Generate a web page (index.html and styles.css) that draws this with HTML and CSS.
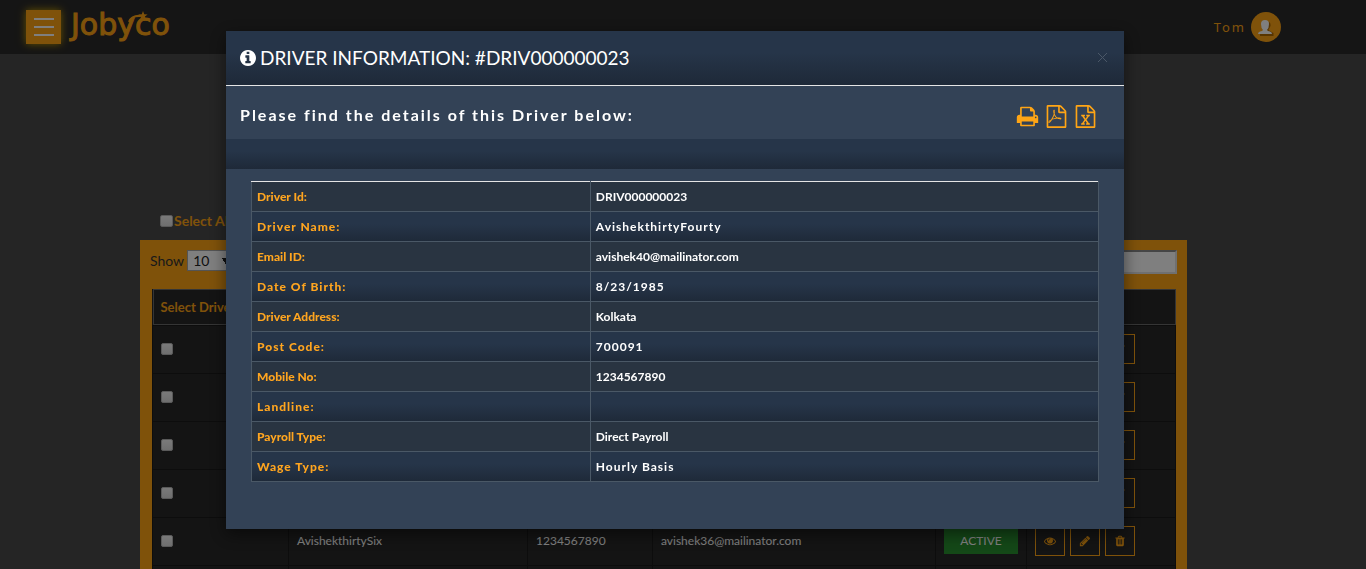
FILE: index.html
```html
<!DOCTYPE html>
<html lang="en">
<head>
<meta charset="utf-8">
<title>Jobyco - Drivers</title>
<link rel="stylesheet" href="styles.css">
</head>
<body>
<svg class="sprite" aria-hidden="true">
  <symbol id="eye" viewBox="0 0 1792 1792"><path d="M1664 960q-152-236-381-353 61 104 61 225 0 185-131.5 316.5t-316.5 131.5-316.5-131.5-131.5-316.5q0-121 61-225-229 117-381 353 133 205 333.5 326.5t434.5 121.5 434.5-121.5 333.5-326.5zm-720-384q0-20-14-34t-34-14q-125 0-214.5 89.5t-89.5 214.5q0 20 14 34t34 14 34-14 14-34q0-86 61-147t147-61q20 0 34-14t14-34zm848 384q0 34-20 69-140 230-376.5 368.5t-499.5 138.5-499.5-139-376.5-368q-20-35-20-69t20-69q140-229 376.5-368t499.5-139 499.5 139 376.5 368q20 35 20 69z"/></symbol>
  <symbol id="pencil" viewBox="0 0 1792 1792"><path d="M491 1536l91-91-235-235-91 91v107h128v128h107zm523-928q0-22-22-22-10 0-17 7l-542 542q-7 7-7 17 0 22 22 22 10 0 17-7l542-542q7-7 7-17zm-54-192l416 416-832 832h-416v-416zm683 96q0 53-37 90l-166 166-416-416 166-165q36-38 90-38 53 0 91 38l235 234q37 39 37 91z"/></symbol>
  <symbol id="trash" viewBox="0 0 1792 1792"><path d="M704 1376v-704q0-14-9-23t-23-9h-64q-14 0-23 9t-9 23v704q0 14 9 23t23 9h64q14 0 23-9t9-23zm256 0v-704q0-14-9-23t-23-9h-64q-14 0-23 9t-9 23v704q0 14 9 23t23 9h64q14 0 23-9t9-23zm256 0v-704q0-14-9-23t-23-9h-64q-14 0-23 9t-9 23v704q0 14 9 23t23 9h64q14 0 23-9t9-23zm-544-992h448l-48-117q-7-9-17-11h-317q-10 2-17 11zm928 32v64q0 14-9 23t-23 9h-96v948q0 83-47 143.5t-113 60.5h-832q-66 0-113-58.5t-47-141.5v-952h-96q-14 0-23-9t-9-23v-64q0-14 9-23t23-9h309l70-167q15-37 54-63t79-26h320q40 0 79 26t54 63l70 167h309q14 0 23 9t9 23z"/></symbol>
  <symbol id="file" viewBox="0 0 1792 1792"><path d="M1596 380q28 28 48 76t20 88v1152q0 40-28 68t-68 28h-1344q-40 0-68-28t-28-68v-1600q0-40 28-68t68-28h896q40 0 88 20t76 48zm-444-244v376h376q-10-29-22-41l-313-313q-12-12-41-22zm384 1528v-1024h-416q-40 0-68-28t-28-68v-416h-768v1536h1280z"/></symbol>
</svg>

<header class="topbar">
  <div class="brand">
    <button class="menu-button" aria-label="Menu"><span></span><span></span><span></span></button>
    <svg class="logo" viewBox="0 0 102 36" role="img" aria-label="Jobyco">
      <text class="logo-text" x="4" y="26">Jobyco</text>
      <path class="logo-swoosh" d="M62 13Q65 6 74 7"/>
      <path class="logo-star" d="M76 2l1.200 3.200 3.400.2-2.700 2.100.9 3.300-2.800-1.900-2.800 1.900.9-3.300-2.700-2.100 3.400-.2z"/>
    </svg>
  </div>
  <div class="user">
    <span>Tom</span>
    <svg class="avatar" viewBox="0 0 30 30" aria-hidden="true">
      <circle cx="15" cy="15" r="15" fill="#ffa515"/>
      <path d="M9 24v-2l5-2 4-10q2 1 1.500 4l-2 4 5 3v3z" fill="#b06b00"/>
      <path d="M10 12q0-4 4-4t4 4q0 4-2 6 .5 1 3 1.500 2 .8 2 2.500H7q0-1.700 2-2.500 2.500-.5 3-1.500-2-2-2-6z" fill="#fff"/>
    </svg>
  </div>
</header>

<main class="page">
  <label class="select-all"><input type="checkbox" class="tick"><span>Select All</span></label>
  <section class="panel">
    <div class="panel-tools">
      <label class="length">Show <select><option>10</option></select></label>
      <input class="search" type="search" aria-label="Search">
    </div>
    <table class="drivers">
      <colgroup><col class="c-pick"><col class="c-name"><col class="c-phone"><col class="c-mail"><col class="c-status"><col class="c-action"></colgroup>
      <thead><tr><th>Select Drivers</th><th></th><th></th><th></th><th></th><th></th></tr></thead>
      <tbody>
        <tr><td><input type="checkbox" class="tick" aria-label="Select driver"></td><td></td><td></td><td></td><td></td><td><div class="actions"><button aria-label="View"><svg><use href="#eye"/></svg></button><button aria-label="Edit"><svg><use href="#pencil"/></svg></button><button aria-label="Delete"><svg><use href="#trash"/></svg></button></div></td></tr>
        <tr><td><input type="checkbox" class="tick" aria-label="Select driver"></td><td></td><td></td><td></td><td></td><td><div class="actions"><button aria-label="View"><svg><use href="#eye"/></svg></button><button aria-label="Edit"><svg><use href="#pencil"/></svg></button><button aria-label="Delete"><svg><use href="#trash"/></svg></button></div></td></tr>
        <tr><td><input type="checkbox" class="tick" aria-label="Select driver"></td><td></td><td></td><td></td><td></td><td><div class="actions"><button aria-label="View"><svg><use href="#eye"/></svg></button><button aria-label="Edit"><svg><use href="#pencil"/></svg></button><button aria-label="Delete"><svg><use href="#trash"/></svg></button></div></td></tr>
        <tr><td><input type="checkbox" class="tick" aria-label="Select driver"></td><td></td><td></td><td></td><td></td><td><div class="actions"><button aria-label="View"><svg><use href="#eye"/></svg></button><button aria-label="Edit"><svg><use href="#pencil"/></svg></button><button aria-label="Delete"><svg><use href="#trash"/></svg></button></div></td></tr>
        <tr><td><input type="checkbox" class="tick" aria-label="Select driver"></td><td>AvishekthirtySix</td><td>1234567890</td><td>avishek36@mailinator.com</td><td><span class="status">ACTIVE</span></td><td><div class="actions"><button aria-label="View"><svg><use href="#eye"/></svg></button><button aria-label="Edit"><svg><use href="#pencil"/></svg></button><button aria-label="Delete"><svg><use href="#trash"/></svg></button></div></td></tr>
        <tr><td></td><td></td><td></td><td></td><td></td><td></td></tr>
      </tbody>
    </table>
  </section>
</main>

<div class="backdrop">
  <div class="dialog" role="dialog" aria-modal="true" aria-labelledby="dialog-title">
    <div class="dialog-head">
      <h1 id="dialog-title">
        <svg class="info" viewBox="128 128 1536 1536" aria-hidden="true"><path d="M1152 1376v-160q0-14-9-23t-23-9h-96v-512q0-14-9-23t-23-9h-320q-14 0-23 9t-9 23v160q0 14 9 23t23 9h96v320h-96q-14 0-23 9t-9 23v160q0 14 9 23t23 9h448q14 0 23-9t9-23zm-128-896v-160q0-14-9-23t-23-9h-192q-14 0-23 9t-9 23v160q0 14 9 23t23 9h192q14 0 23-9t9-23zm640 416q0 209-103 385.5t-279.5 279.5-385.5 103-385.5-103-279.5-279.5-103-385.5 103-385.5 279.5-279.5 385.5-103 385.5 103 279.5 279.5 103 385.5z"/></svg>
        DRIVER INFORMATION: #DRIV000000023
      </h1>
      <button class="close" aria-label="Close"><svg viewBox="0 0 11 11"><path d="M1 1l9 9M10 1l-9 9"/></svg></button>
    </div>
    <div class="dialog-sub">
      <h2>Please find the details of this Driver below:</h2>
      <div class="exports">
        <button aria-label="Print"><svg viewBox="0 0 1792 1792"><path d="M448 1536h896v-256h-896v256zm0-640h896v-384h-160q-40 0-68-28t-28-68v-160h-640v640zm1152 64q0-26-19-45t-45-19-45 19-19 45 19 45 45 19 45-19 19-45zm128 0v416q0 13-9.500 22.500t-22.500 9.500h-224v160q0 40-28 68t-68 28h-960q-40 0-68-28t-28-68v-160h-224q-13 0-22.500-9.500t-9.500-22.500v-416q0-79 56.500-135.500t135.500-56.500h64v-544q0-40 28-68t68-28h672q40 0 88 20t76 48l152 152q28 28 48 76t20 88v256h64q79 0 135.500 56.500t56.500 135.500z"/></svg></button>
        <button aria-label="Export PDF"><svg viewBox="0 0 1792 1792"><use href="#file"/><path d="M894 927q33 26 84 56 59-7 117-7 147 0 177 49 16 22 2 52 0 1-1 2l-2 2v1q-6 38-71 38-48 0-115-20t-130-53q-221 24-392 83-153 262-242 262-15 0-28-7l-24-12q-1-1-6-5-10-10-6-36 9-40 56-91.500t132-96.500q14-9 23 6 2 2 2 4 52-85 107-197 68-136 104-262-24-82-30.500-159.500t6.500-127.500q11-40 42-40h22q23 0 35 15 18 21 9 68-2 6-4 8 1 3 1 8v30q-2 123-14 192 55 164 146 238zm-576 411q52-24 137-158-51 40-87.500 84t-49.500 74zm398-920q-15 42-2 132 1-7 7-44 0-3 7-43 1-4 4-8-1-1-1-2t-1-2-1-3q-1-22-13-36 0 1-1 2v2zm-124 661q135-54 284-81-2-1-13-9.500t-16-13.500q-76-67-127-176-27 86-83 197-30 56-45 83zm646-16q-24-24-140-24 76 28 124 28 14 0 18-1 0-1-2-3z"/></svg></button>
        <button aria-label="Export Excel"><svg viewBox="0 0 1792 1792"><use href="#file"/><path d="M557 1430v106h281v-106h-75l103-161q5-7 10-16.500t7.500-13.500 3.500-4h2q1 4 5 10 2 4 4.500 7.500t6 8 6.500 8.500l107 161h-76v106h291v-106h-68l-192-273 195-282h67v-107h-279v107h74l-103 159q-4 7-10 16.500t-9 13.500l-2 3h-2q-1-4-5-10-6-11-17-23l-106-159h76v-107h-290v107h68l189 272-194 283h-68z"/></svg></button>
      </div>
    </div>
    <div class="band"></div>
    <table class="details">
      <tbody>
        <tr><th scope="row">Driver Id:</th><td>DRIV000000023</td></tr>
        <tr><th scope="row">Driver Name:</th><td>AvishekthirtyFourty</td></tr>
        <tr><th scope="row">Email ID:</th><td>avishek40@mailinator.com</td></tr>
        <tr><th scope="row">Date Of Birth:</th><td>8/23/1985</td></tr>
        <tr><th scope="row">Driver Address:</th><td>Kolkata</td></tr>
        <tr><th scope="row">Post Code:</th><td>700091</td></tr>
        <tr><th scope="row">Mobile No:</th><td>1234567890</td></tr>
        <tr><th scope="row">Landline:</th><td></td></tr>
        <tr><th scope="row">Payroll Type:</th><td>Direct Payroll</td></tr>
        <tr><th scope="row">Wage Type:</th><td>Hourly Basis</td></tr>
      </tbody>
    </table>
  </div>
</div>
</body>
</html>
```
FILE: styles.css
```css
* { box-sizing: border-box; }
body {
  display: flex;
  flex-direction: column;
  height: 100vh;
  margin: 0;
  background: #4a4a4a;
  color: #fff;
  font: 12px/20px Lato, sans-serif;
}
button { padding: 0; background: none; border: 0; color: inherit; font: inherit; cursor: pointer; }
svg { display: block; fill: currentColor; }
.sprite { display: none; }

.topbar {
  display: flex;
  flex: none;
  justify-content: space-between;
  align-items: center;
  height: 54px;
  padding: 0 85px 0 26px;
  background: #2a2a2a;
}
.brand { display: flex; align-items: center; gap: 6px; }
.menu-button {
  display: flex;
  flex-direction: column;
  justify-content: center;
  align-items: center;
  gap: 6px;
  width: 35px;
  height: 34px;
  background: #ffa515;
  box-shadow: 0 0 8px #c8a000;
}
.menu-button span { width: 20px; height: 2px; background: #fff; }
.logo { width: 102px; height: 36px; color: #ffa515; overflow: visible; }
.logo-text { font: 30px "DejaVu Sans", sans-serif; stroke: currentColor; stroke-width: 1; }
.logo-swoosh { fill: none; stroke: currentColor; stroke-width: 2; }
.user {
  display: flex;
  align-items: center;
  gap: 5px;
  color: #ffa515;
  font: 13px/20px "Noto Sans", sans-serif;
  letter-spacing: 2px;
}
.avatar { width: 30px; height: 30px; }

.page { flex: 1; min-height: 0; overflow: hidden; padding: 157px 179px 0 140px; }
.select-all {
  display: flex;
  align-items: center;
  gap: 1px;
  padding-left: 20px;
  color: #ffa515;
  font-size: 14px;
  font-weight: 700;
}
.tick {
  appearance: none;
  display: block;
  width: 12px;
  height: 12px;
  margin: 0;
  border: 1px solid #b4b4b4;
  border-radius: 2px;
  background: linear-gradient(#f4f4f4, #dedede);
}
.select-all .tick { width: 13px; }
.panel { margin-top: 9px; padding: 10px 11px 0 12px; background: #ffa515; }
.panel-tools {
  display: flex;
  justify-content: space-between;
  height: 39px;
  margin: 0 -1px 0 -2px;
  color: #333;
  font-size: 14px;
}
.length { display: flex; gap: 3px; height: 22px; line-height: 22px; }
.length select {
  appearance: none;
  width: 50px;
  height: 21px;
  padding: 0 5px;
  border: 1px solid #a9a9a9;
  border-radius: 0;
  background:
    linear-gradient(60deg, transparent 50%, #222 50%) 34px 7px / 4px 7px no-repeat,
    linear-gradient(-60deg, transparent 50%, #222 50%) 38px 7px / 4px 7px no-repeat,
    #fff;
  color: #222;
  font: 14px/18px Lato, sans-serif;
}
.search { width: 170px; height: 24px; border: 2px inset #e0e0e0; background: #fff; }

.drivers { width: 100%; table-layout: fixed; border-collapse: collapse; background: #282828; }
.c-pick { width: 136px; }
.c-name { width: 239px; }
.c-phone { width: 125px; }
.c-mail { width: 283px; }
.c-status { width: 91px; }
.drivers thead { outline: 1px solid #6a6a6a; outline-offset: -1px; }
.drivers th { height: 36px; padding: 0 8px; color: #ffa515; font-size: 13px; font-weight: 700; text-align: left; white-space: nowrap; }
.drivers td { height: 48px; padding: 0 8px; border: 1px solid #1a1a1a; }
.actions { display: flex; gap: 5px; }
.actions button { display: grid; place-items: center; width: 30px; height: 30px; border: 1px solid #ffa515; color: #ffa515; }
.actions svg { width: 12px; height: 12px; }
.status { display: block; width: 74px; background: #28902f; line-height: 26px; text-align: center; }

.backdrop {
  position: fixed;
  inset: 0;
  padding: 31px 242px 0 226px;
  background: rgba(0, 0, 0, .5);
}
.dialog { padding-bottom: 47px; background: #334256; box-shadow: 0 5px 15px rgba(0, 0, 0, .5); }
.dialog-head {
  display: flex;
  justify-content: space-between;
  align-items: center;
  height: 55px;
  padding: 0 16px 1px 14px;
  border-bottom: 1px solid #e5e5e5;
  background: linear-gradient(#263549 40%, #1e2938);
}
h1 { display: flex; align-items: center; gap: 4px; margin: 0; font-size: 19px; font-weight: 400; }
.info { width: 16px; height: 16px; }
.close { color: #4b5868; }
.close svg { width: 11px; height: 11px; stroke: currentColor; }
.dialog-sub {
  display: flex;
  justify-content: space-between;
  align-items: center;
  height: 53px;
  padding: 4px 27px 0 14px;
}
h2 { margin: 0; font-size: 16px; font-weight: 700; letter-spacing: 2px; }
.exports { display: flex; gap: 6px; padding-top: 3px; color: #ffa515; }
.exports svg { width: 23px; height: 23px; }
.band { height: 30px; background: linear-gradient(#263549 40%, #1e2938); }
.details {
  width: calc(100% - 50px);
  margin: 12px 25px 0;
  table-layout: fixed;
  border-collapse: collapse;
}
.details th, .details td {
  height: 30px;
  padding: 0 5px;
  border: 1px solid #4a5866;
  font-weight: 700;
  text-align: left;
}
.details th { width: 40%; color: #ffa51f; font-weight: 900; }
.details tr { background: #293441; }
.details tr:nth-child(even) { background: linear-gradient(#263549 40%, #1e2938); letter-spacing: 1px; }
.details tr:first-child > * { border-top-color: #e5e5e5; }
```
